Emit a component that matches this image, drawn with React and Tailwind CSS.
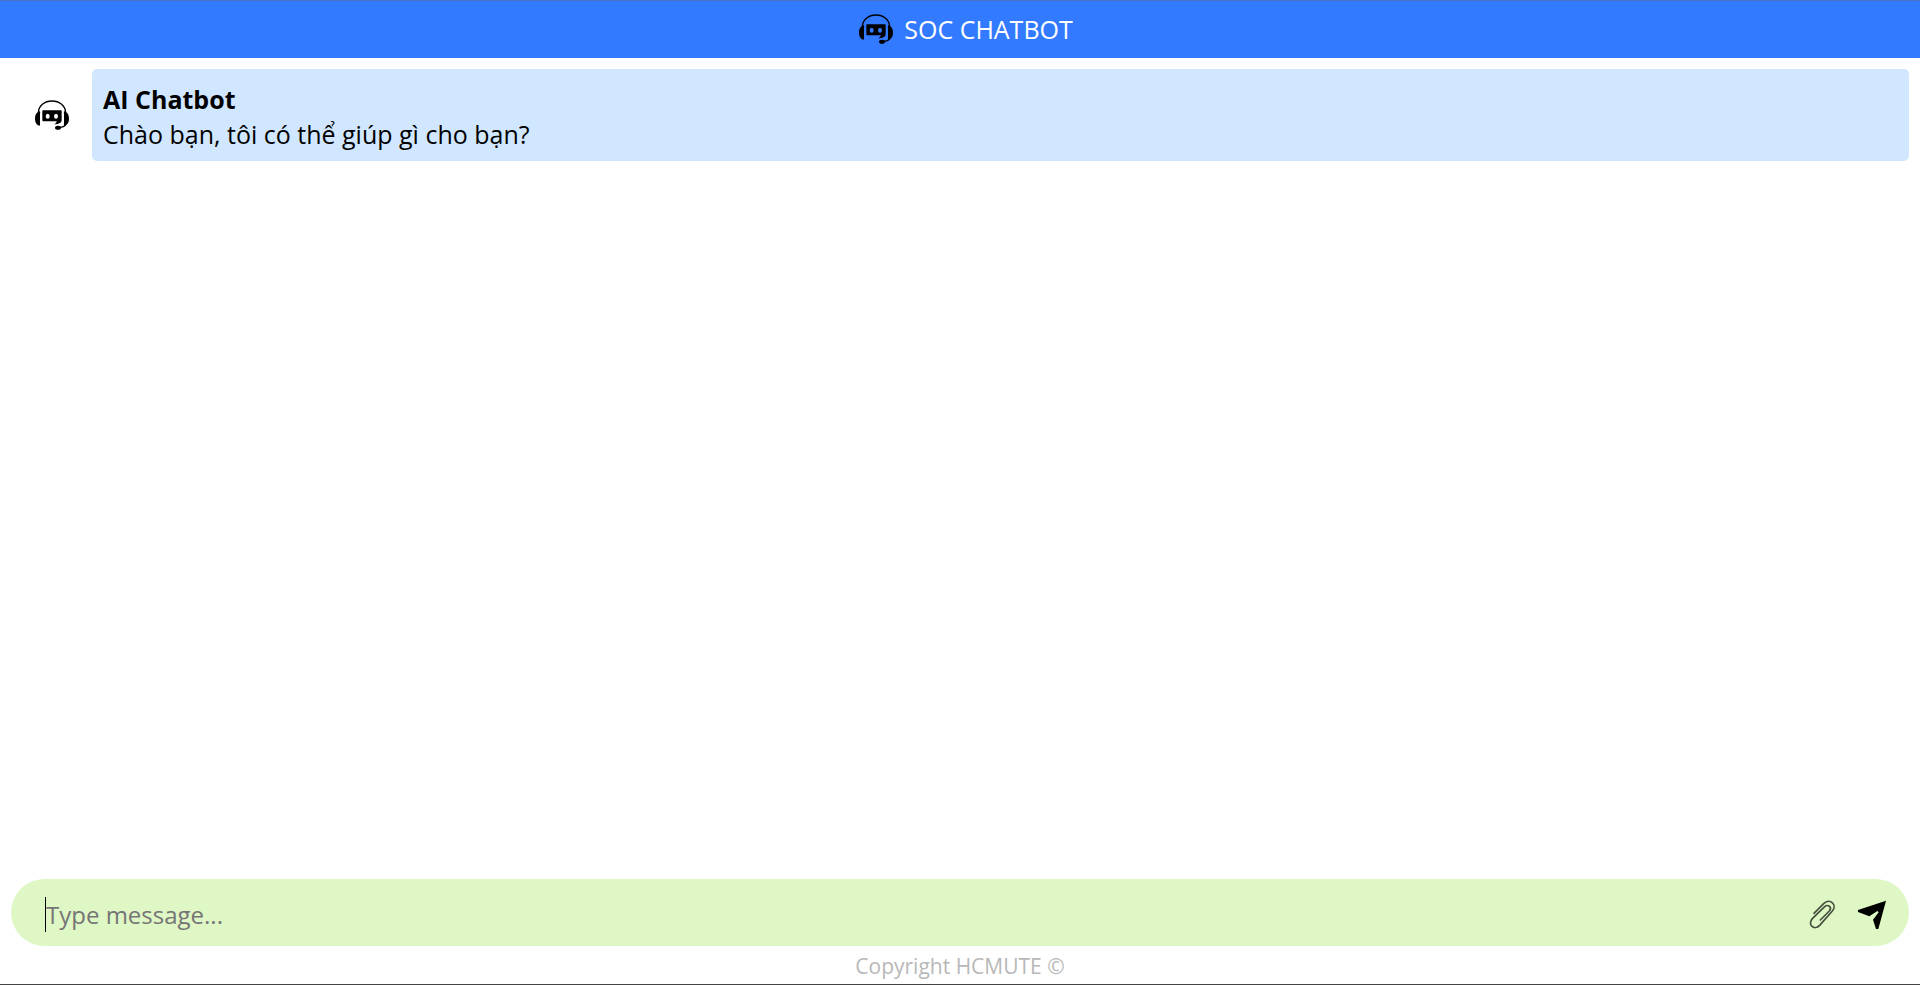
import React from "react";

function BotIcon() {
  return (
    <svg viewBox="0 0 102 90" className="h-[30px] w-[34px] shrink-0" fill="currentColor" aria-hidden="true">
      <path d="M10 38C11 17 28 3 51 3s40 14 41 35" fill="none" stroke="currentColor" strokeWidth="4" />
      <path d="M15 34C6 35 0 44 0 56c0 11 5 20 14 21 2-2 1-6 1-11V46c0-5 1-9 0-12Z" />
      <path d="M87 34c9 1 15 10 15 22 0 11-5 20-14 21-2-2-1-6-1-11V46c0-5-1-9 0-12Z" />
      <path fillRule="evenodd" d="M24 31h54q2 0 2 3v25c0 6-2 9-7 11-4 2-8 3-15 3 5-3 7-6 7-9H25q-3 0-3-4V34q0-3 2-3ZM38 41q-6 0-6 7.500t6 7.500 6-7.500-6-7.500Zm25 0q-6 0-6 7.500t6 7.500 6-7.500-6-7.500Z" />
      <path d="M92 74c-3 6-10 8-20 8" fill="none" stroke="currentColor" strokeWidth="4" />
      <ellipse cx="69" cy="83" rx="9" ry="6" />
    </svg>
  );
}

function ClipIcon() {
  return (
    <svg viewBox="0 0 108 108" className="h-9 w-9" fill="none" stroke="#454f3e" strokeWidth="5" strokeLinecap="round" aria-hidden="true">
      <path d="M27 49L56 20C75 2 98 24 82 42L44 85C28 102 6 83 22 65L59 29C70 20 82 32 73 42L46 69" />
    </svg>
  );
}

function SendIcon() {
  return (
    <svg viewBox="0 0 108 108" className="h-9 w-9" fill="currentColor" aria-hidden="true">
      <path d="M93 11L9 39v6l34 13 24-16 4 4-17 22 9 28h7Z" />
    </svg>
  );
}

export default function App() {
  return (
    <div className="flex h-screen flex-col border-b border-[#444] bg-white font-['Open_Sans','Noto_Sans',sans-serif] text-black">
      <header className="flex h-[58px] shrink-0 items-center justify-center gap-[11px] border-t border-[#4a72c0] bg-[#327aff] pb-px pl-[12px]">
        <BotIcon />
        <h1 className="text-[25px] leading-9 text-white">SOC CHATBOT</h1>
      </header>
      <main className="min-h-0 flex-1 overflow-y-auto p-[11px]">
        <article className="flex items-center">
          <div className="flex w-[81px] shrink-0 justify-center">
            <BotIcon />
          </div>
          <div className="flex-1 rounded-[5px] bg-[#d0e7ff] px-[11px] pt-[13px] pb-[9px] text-[25px] leading-[35px]">
            <h2 className="font-bold">AI Chatbot</h2>
            <p>Chào bạn, tôi có thể giúp gì cho bạn?</p>
          </div>
        </article>
      </main>
      <form className="mx-[11px] flex h-[67px] shrink-0 items-center rounded-full bg-[#dff7c5] pt-1 pr-[18px] pl-[34px]" onSubmit={(e) => e.preventDefault()}>
        <span className="h-[35px] w-px bg-black" aria-hidden="true" />
        <input
          aria-label="Message"
          placeholder="Type message..."
          className="min-w-0 flex-1 bg-transparent text-[24px] leading-[35px] outline-none placeholder:text-[#757575]"
        />
        <button type="button" aria-label="Attach file" className="mr-[14px]">
          <ClipIcon />
        </button>
        <button type="submit" aria-label="Send message">
          <SendIcon />
        </button>
      </form>
      <footer className="h-[38px] shrink-0 text-center text-[21px] leading-10 text-[#b8b8b8]">Copyright HCMUTE ©</footer>
    </div>
  );
}
